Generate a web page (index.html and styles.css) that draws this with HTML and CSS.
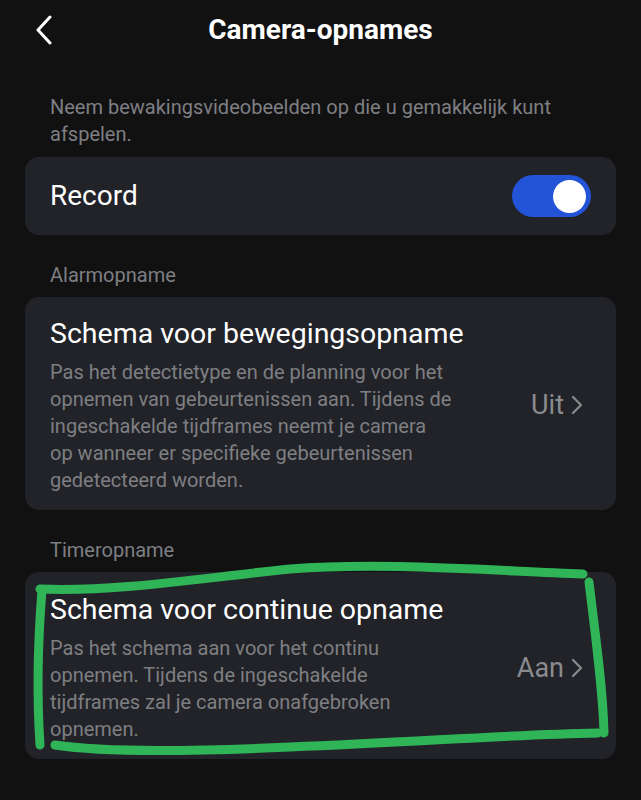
FILE: index.html
```html
<!DOCTYPE html>
<html lang="nl">
<head>
<meta charset="utf-8">
<title>Camera-opnames</title>
<link rel="stylesheet" href="styles.css">
</head>
<body>
<div class="page">
  <header class="header">
    <div class="back">
      <svg width="18" height="30" viewBox="0 0 18 30"><path d="M15 2 L3 15 L15 28" fill="none" stroke="#ffffff" stroke-width="3" stroke-linecap="round" stroke-linejoin="round"/></svg>
    </div>
    <h1 class="title">Camera-opnames</h1>
    <div></div>
  </header>

  <p class="intro">Neem bewakingsvideobeelden op die u gemakkelijk kunt<br>afspelen.</p>

  <div class="card card-row">
    <span class="row-label">Record</span>
    <span class="toggle"><span class="knob"></span></span>
  </div>

  <div class="section-label">Alarmopname</div>
  <div class="card card-item">
    <div class="item-text">
      <div class="item-title">Schema voor bewegingsopname</div>
      <div class="item-desc">Pas het detectietype en de planning voor het<br>opnemen van gebeurtenissen aan. Tijdens de<br>ingeschakelde tijdframes neemt je camera<br>op wanneer er specifieke gebeurtenissen<br>gedetecteerd worden.</div>
    </div>
    <div class="item-value">Uit<svg class="chev" width="12" height="20" viewBox="0 0 12 20"><path d="M2 2 L10 10 L2 18" fill="none" stroke="#8a8b8e" stroke-width="2.2" stroke-linecap="round" stroke-linejoin="round"/></svg></div>
  </div>

  <div class="section-label">Timeropname</div>
  <div class="card card-item card-last">
    <div class="item-text">
      <div class="item-title">Schema voor continue opname</div>
      <div class="item-desc">Pas het schema aan voor het continu<br>opnemen. Tijdens de ingeschakelde<br>tijdframes zal je camera onafgebroken<br>opnemen.</div>
    </div>
    <div class="item-value">Aan<svg class="chev" width="12" height="20" viewBox="0 0 12 20"><path d="M2 2 L10 10 L2 18" fill="none" stroke="#8a8b8e" stroke-width="2.2" stroke-linecap="round" stroke-linejoin="round"/></svg></div>
  </div>

  <svg class="scribble" width="641" height="800" viewBox="0 0 641 800">
    <g fill="none" stroke="#2fb457" stroke-width="9" stroke-linecap="round" stroke-linejoin="round">
      <path d="M40 589 C120 592 200 578 290 569 C380 562 480 570 583 574"/>
      <path d="M589 582 C596 640 603 690 604 733"/>
      <path d="M598 733 C500 735 420 742 290 747 C180 752 100 752 55 745"/>
      <path d="M42 590 C38 640 37 700 40 745"/>
    </g>
  </svg>
</div>
</body>
</html>
```

FILE: styles.css
```css
html, body {
  margin: 0;
  padding: 0;
  background: #111112;
}
body {
  font-family: Roboto, "Noto Sans", "Liberation Sans", sans-serif;
  color: #ffffff;
}
.page {
  position: relative;
  width: 641px;
  min-height: 800px;
  overflow: hidden;
}
.header {
  height: 60px;
  display: grid;
  grid-template-columns: 1fr auto 1fr;
  align-items: center;
}
.back {
  padding-left: 35px;
  display: flex;
  align-items: center;
  height: 60px;
}
.title {
  margin: 0;
  font-size: 28px;
  font-weight: 700;
  line-height: 36px;
  color: #ffffff;
}
.intro {
  margin: 34px 0 0;
  padding: 0 50px;
  font-size: 20px;
  line-height: 27px;
  color: #7e7f82;
}
.card {
  margin: 9px 25px 0;
  background: #222328;
  border-radius: 14px;
}
.card-row {
  height: 78px;
  padding: 0 25px 0 25px;
  display: flex;
  align-items: center;
  justify-content: space-between;
  box-sizing: border-box;
}
.row-label {
  font-size: 28px;
  line-height: 36px;
}
.toggle {
  width: 79px;
  height: 42px;
  border-radius: 21px;
  background: #2353d6;
  display: flex;
  align-items: center;
  justify-content: flex-end;
  padding: 0 5px;
  box-sizing: border-box;
}
.knob {
  width: 33px;
  height: 33px;
  border-radius: 50%;
  background: #ffffff;
}
.section-label {
  margin-top: 27px;
  padding-left: 50px;
  font-size: 20px;
  line-height: 27px;
  color: #7e7f82;
}
.card-item {
  margin-top: 8px;
  padding: 19px 33px 16px 25px;
  display: flex;
  align-items: center;
  justify-content: space-between;
}
.card-last {
  padding-top: 20px;
}
.item-text {
  display: flex;
  flex-direction: column;
  gap: 7px;
}
.item-title {
  font-size: 28.5px;
  line-height: 36px;
  color: #ffffff;
}
.item-desc {
  font-size: 20px;
  line-height: 27px;
  color: #7e7f82;
}
.item-value {
  display: flex;
  align-items: center;
  gap: 7px;
  font-size: 27px;
  color: #8a8b8e;
}
.chev {
  display: block;
}
.scribble {
  position: absolute;
  left: 0;
  top: 0;
  pointer-events: none;
}
```
